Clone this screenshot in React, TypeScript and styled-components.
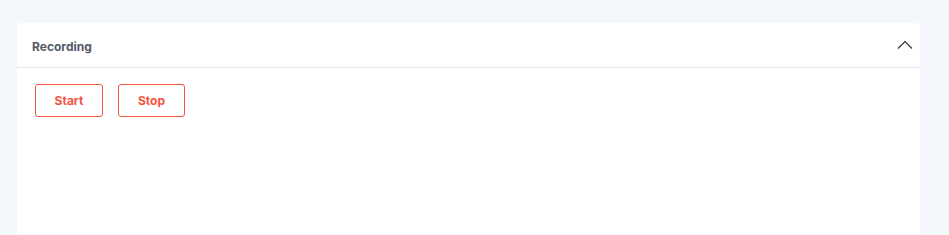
import { useState } from "react";
import styled, { createGlobalStyle } from "styled-components";

const GlobalStyle = createGlobalStyle`
    html, body {
        margin: 0;
        padding: 0;
        background: #f4f7fc;
        font-family: Inter, "Noto Sans", "Liberation Sans", sans-serif;
    }
`

const Page = styled.div`
    padding: 23px 29px 0 17px;
`

const Card = styled.section`
    background: #fff;
    border-radius: 4px 4px 0 0;
    min-height: calc(100vh - 23px);
`

const Header = styled.div`
    height: 45px;
    display: flex;
    align-items: center;
    justify-content: space-between;
    padding: 2px 5px 0 15px;
    box-sizing: border-box;
    border-bottom: 1px solid #e2e4e8;
`

const Title = styled.h3`
    margin: 0;
    font-size: 12px;
    font-weight: 700;
    color: #535a66;
`

const Toggle = styled.button`
    border: none;
    background: none;
    padding: 0;
    width: 20px;
    height: 20px;
    margin-top: -2px;
    display: flex;
    align-items: center;
    justify-content: center;
    cursor: pointer;
    color: #333;
`

const Body = styled.div`
    display: flex;
    gap: 15px;
    padding: 16px 18px;
`

const ActionButton = styled.button<{ $wide?: boolean }>`
    height: 33px;
    min-width: ${p => p.$wide ? 68 : 67}px;
    padding: 0 18px;
    border: 1px solid #f4533f;
    border-radius: 3px;
    background: #fff;
    color: #f4533f;
    font-family: inherit;
    font-size: 12px;
    font-weight: 700;
    cursor: pointer;
`

export default function App() {
    const [open, setOpen] = useState(true)

    return (<>
        <GlobalStyle />
        <Page>
            <Card>
                <Header>
                    <Title>Recording</Title>
                    <Toggle onClick={() => setOpen(!open)}>
                        <svg width="16" height="10" viewBox="0 0 16 10" fill="none">
                            <path d={open ? "M1 8.5 L8 1.5 L15 8.5" : "M1 1.5 L8 8.5 L15 1.5"} stroke="currentColor" strokeWidth="1.2" />
                        </svg>
                    </Toggle>
                </Header>
                {open &&
                <Body>
                    <ActionButton $wide>Start</ActionButton>
                    <ActionButton>Stop</ActionButton>
                </Body>
                }
            </Card>
        </Page>
    </>)
}
